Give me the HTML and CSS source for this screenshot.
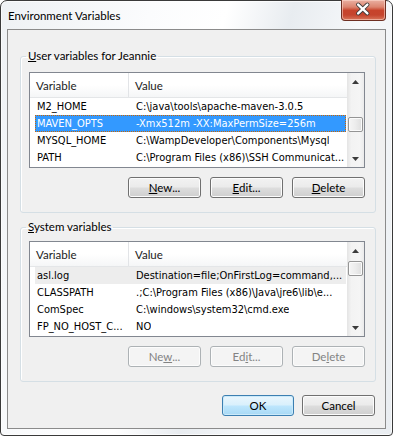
FILE: index.html
```html
<!DOCTYPE html>
<html>
<head>
<meta charset="utf-8">
<title>Environment Variables</title>
<link rel="stylesheet" href="styles.css">
</head>
<body>
<div class="window">
  <div class="titlebar">
    <span class="title">Environment Variables</span>
    <div class="close">
      <svg width="45" height="20" viewBox="0 0 45 20">
        <path d="M17.5 5.5 L27 14.5 M27 5.5 L17.5 14.5" stroke="#3d3a3a" stroke-width="4.2" stroke-linecap="round" fill="none"/>
        <path d="M17.5 5.5 L27 14.5 M27 5.5 L17.5 14.5" stroke="#ffffff" stroke-width="2.4" stroke-linecap="round" fill="none"/>
      </svg>
    </div>
  </div>
  <div class="client">
    <fieldset class="group group-user">
      <legend><u>U</u>ser variables for Jeannie</legend>
      <div class="listview">
        <div class="lv-body">
          <div class="lv-header">
            <div class="hcol hcol-name">Variable</div>
            <div class="hcol hcol-value">Value</div>
          </div>
          <div class="lv-row"><span class="cell name">M2_HOME</span><span class="cell value">C:\java\tools\apache-maven-3.0.5</span></div>
          <div class="lv-row selected"><span class="cell name">MAVEN_OPTS</span><span class="cell value">-Xmx512m -XX:MaxPermSize=256m</span></div>
          <div class="lv-row"><span class="cell name">MYSQL_HOME</span><span class="cell value">C:\WampDeveloper\Components\Mysql</span></div>
          <div class="lv-row"><span class="cell name">PATH</span><span class="cell value">C:\Program Files (x86)\SSH Communicat...</span></div>
        </div>
        <div class="scrollbar">
          <div class="sb-arrow"><svg width="7" height="4" viewBox="0 0 7 4"><polygon points="0,4 3.5,0 7,4" fill="#3b3b3b"/></svg></div>
          <div class="sb-track"><div class="sb-thumb" style="margin-top:27px"></div></div>
          <div class="sb-arrow"><svg width="7" height="4" viewBox="0 0 7 4"><polygon points="0,0 7,0 3.5,4" fill="#3b3b3b"/></svg></div>
        </div>
      </div>
      <div class="btn-row">
        <button class="btn"><u>N</u>ew...</button>
        <button class="btn"><u>E</u>dit...</button>
        <button class="btn"><u>D</u>elete</button>
      </div>
    </fieldset>

    <fieldset class="group group-system">
      <legend><u>S</u>ystem variables</legend>
      <div class="listview">
        <div class="lv-body">
          <div class="lv-header">
            <div class="hcol hcol-name">Variable</div>
            <div class="hcol hcol-value">Value</div>
          </div>
          <div class="lv-row inactive"><span class="cell name">asl.log</span><span class="cell value">Destination=file;OnFirstLog=command,...</span></div>
          <div class="lv-row"><span class="cell name">CLASSPATH</span><span class="cell value">.;C:\Program Files (x86)\Java\jre6\lib\e...</span></div>
          <div class="lv-row"><span class="cell name">ComSpec</span><span class="cell value">C:\windows\system32\cmd.exe</span></div>
          <div class="lv-row"><span class="cell name">FP_NO_HOST_C...</span><span class="cell value">NO</span></div>
        </div>
        <div class="scrollbar">
          <div class="sb-arrow"><svg width="7" height="4" viewBox="0 0 7 4"><polygon points="0,4 3.5,0 7,4" fill="#3b3b3b"/></svg></div>
          <div class="sb-track"><div class="sb-thumb" style="margin-top:2px"></div></div>
          <div class="sb-arrow"><svg width="7" height="4" viewBox="0 0 7 4"><polygon points="0,0 7,0 3.5,4" fill="#3b3b3b"/></svg></div>
        </div>
      </div>
      <div class="btn-row">
        <button class="btn" disabled>Ne<u>w</u>...</button>
        <button class="btn" disabled>Ed<u>i</u>t...</button>
        <button class="btn" disabled>De<u>l</u>ete</button>
      </div>
    </fieldset>

    <div class="dialog-buttons">
      <button class="btn btn-default btn-ok">OK</button>
      <button class="btn btn-cancel">Cancel</button>
    </div>
  </div>
</div>
</body>
</html>
```

FILE: styles.css
```css
html, body {
  margin: 0;
  padding: 0;
  background: #ffffff;
}

body {
  font-family: Lato, "Noto Sans", sans-serif;
  font-size: 11.5px;
  color: #000;
}

.window {
  width: 393px;
  height: 436px;
  box-sizing: border-box;
  border: 1px solid #3a3a3a;
  border-radius: 7px 7px 4px 4px;
  padding: 0 6px 6px 6px;
  display: flex;
  flex-direction: column;
  background: linear-gradient(105deg, #eef1f4 0%, #fbfcfd 30%, #ffffff 45%, #e8ecf0 58%, #f6f8fa 72%, #e9edf1 100%);
  box-shadow: inset 0 0 0 1px rgba(255, 255, 255, 0.7);
}

.titlebar {
  height: 28px;
  display: flex;
  align-items: flex-start;
  flex: none;
}

.title {
  margin-top: 8px;
  margin-left: 1px;
  font-size: 11.5px;
  line-height: 14px;
  color: #000;
}

.close {
  margin-left: auto;
  margin-top: -1px;
  width: 45px;
  height: 21px;
  box-sizing: border-box;
  border: 1px solid #6e2f22;
  border-top: none;
  border-radius: 0 0 4px 4px;
  background: linear-gradient(#eab0a2 0%, #dc8570 35%, #c7432b 52%, #c5442d 75%, #d8755a 100%);
  box-shadow: inset 0 0 0 1px rgba(255, 220, 210, 0.55);
  display: flex;
}

.close svg {
  display: block;
  margin-left: -1px;
  margin-top: -1px;
}

.client {
  flex: 1;
  border: 1px solid #8b8b8b;
  background: #f0f0f0;
  display: flex;
  flex-direction: column;
  padding: 0 9px 0 12px;
}

.group {
  margin: 0;
  padding: 0 10px 14px 8px;
  border: 1px solid #d5dfe5;
  border-radius: 3px;
  min-width: 0;
  box-shadow: 1px 1px 0 #ffffff inset;
}

.group-user {
  margin-top: 19px;
}

.group-system {
  margin-top: 7px;
}

.group legend {
  padding: 0 2px;
  margin-left: -3px;
  line-height: 14px;
  font-size: 11.5px;
}

.group-user .listview {
  margin-top: 9px;
}

.group-system .listview {
  margin-top: 7px;
}

.listview {
  height: 96px;
  box-sizing: border-box;
  border: 1px solid #828790;
  background: #ffffff;
  display: flex;
  overflow: hidden;
}

.lv-body {
  flex: 1;
  min-width: 0;
  display: flex;
  flex-direction: column;
}

.lv-header {
  height: 25px;
  flex: none;
  display: flex;
  box-sizing: border-box;
  background: linear-gradient(#ffffff 0%, #ffffff 50%, #f5f6f7 100%);
  border-bottom: 1px solid #e4e6e8;
  font-size: 11.5px;
  color: #1c1c1c;
}

.hcol {
  display: flex;
  align-items: center;
  white-space: nowrap;
}

.hcol-name {
  width: 99px;
  padding-left: 6px;
  box-sizing: border-box;
  border-right: 1px solid #e2e4e7;
}

.hcol-value {
  padding-left: 6px;
}

.lv-row {
  height: 17px;
  flex: none;
  margin-left: 5px;
  margin-right: 1px;
  display: flex;
  align-items: center;
  font-family: "DejaVu Sans Condensed", "DejaVu Sans", sans-serif;
  font-stretch: semi-condensed;
  font-size: 11px;
  white-space: nowrap;
  color: #000;
}

.lv-row.selected {
  background: #3399ff;
  color: #ffffff;
  outline: 1px dotted #cc6600;
  outline-offset: -1px;
}

.lv-row.inactive {
  background: #ededed;
}

.cell {
  overflow: hidden;
}

.cell.name {
  width: 95px;
  padding-left: 2px;
  box-sizing: border-box;
  flex: none;
}

.cell.value {
  padding-left: 6px;
}

.scrollbar {
  width: 17px;
  flex: none;
  display: flex;
  flex-direction: column;
  background: linear-gradient(to right, #e4e4e4 0%, #f3f3f3 25%, #f5f5f5 75%, #ebebeb 100%);
}

.sb-arrow {
  height: 17px;
  flex: none;
  display: flex;
  align-items: center;
  justify-content: center;
}

.sb-arrow svg {
  display: block;
}

.sb-track {
  flex: 1;
  display: flex;
  flex-direction: column;
  align-items: center;
}

.sb-thumb {
  width: 15px;
  height: 15px;
  box-sizing: border-box;
  border: 1px solid #959595;
  border-radius: 2px;
  background: linear-gradient(to right, #f5f5f5 0%, #ececec 50%, #dedede 100%);
  box-shadow: inset 0 0 0 1px #fbfbfb;
}

.btn-row {
  margin-top: 9px;
  display: flex;
  justify-content: flex-end;
  gap: 9px;
}

.btn {
  width: 73px;
  height: 21px;
  box-sizing: border-box;
  padding: 0;
  margin: 0;
  border: 1px solid #707070;
  border-radius: 3px;
  background: linear-gradient(#f2f2f2 0%, #ebebeb 48%, #dddddd 52%, #cfcfcf 100%);
  box-shadow: inset 0 0 0 1px #fcfcfc;
  font-family: Lato, "Noto Sans", sans-serif;
  font-size: 11.5px;
  line-height: 14px;
  color: #000;
  text-align: center;
}

.btn:disabled {
  border-color: #adb2b5;
  background: #f4f4f4;
  color: #838383;
}

.btn-default {
  border-color: #3c7fb1;
  background: linear-gradient(#eaf6fd 0%, #d9f0fc 48%, #bee6fd 52%, #a7d9f5 100%);
  box-shadow: inset 0 0 0 1px #cbeafa;
}

.dialog-buttons {
  margin-top: 13px;
  margin-right: 1px;
  display: flex;
  justify-content: flex-end;
  gap: 8px;
}

.btn-ok {
  width: 72px;
}
```
